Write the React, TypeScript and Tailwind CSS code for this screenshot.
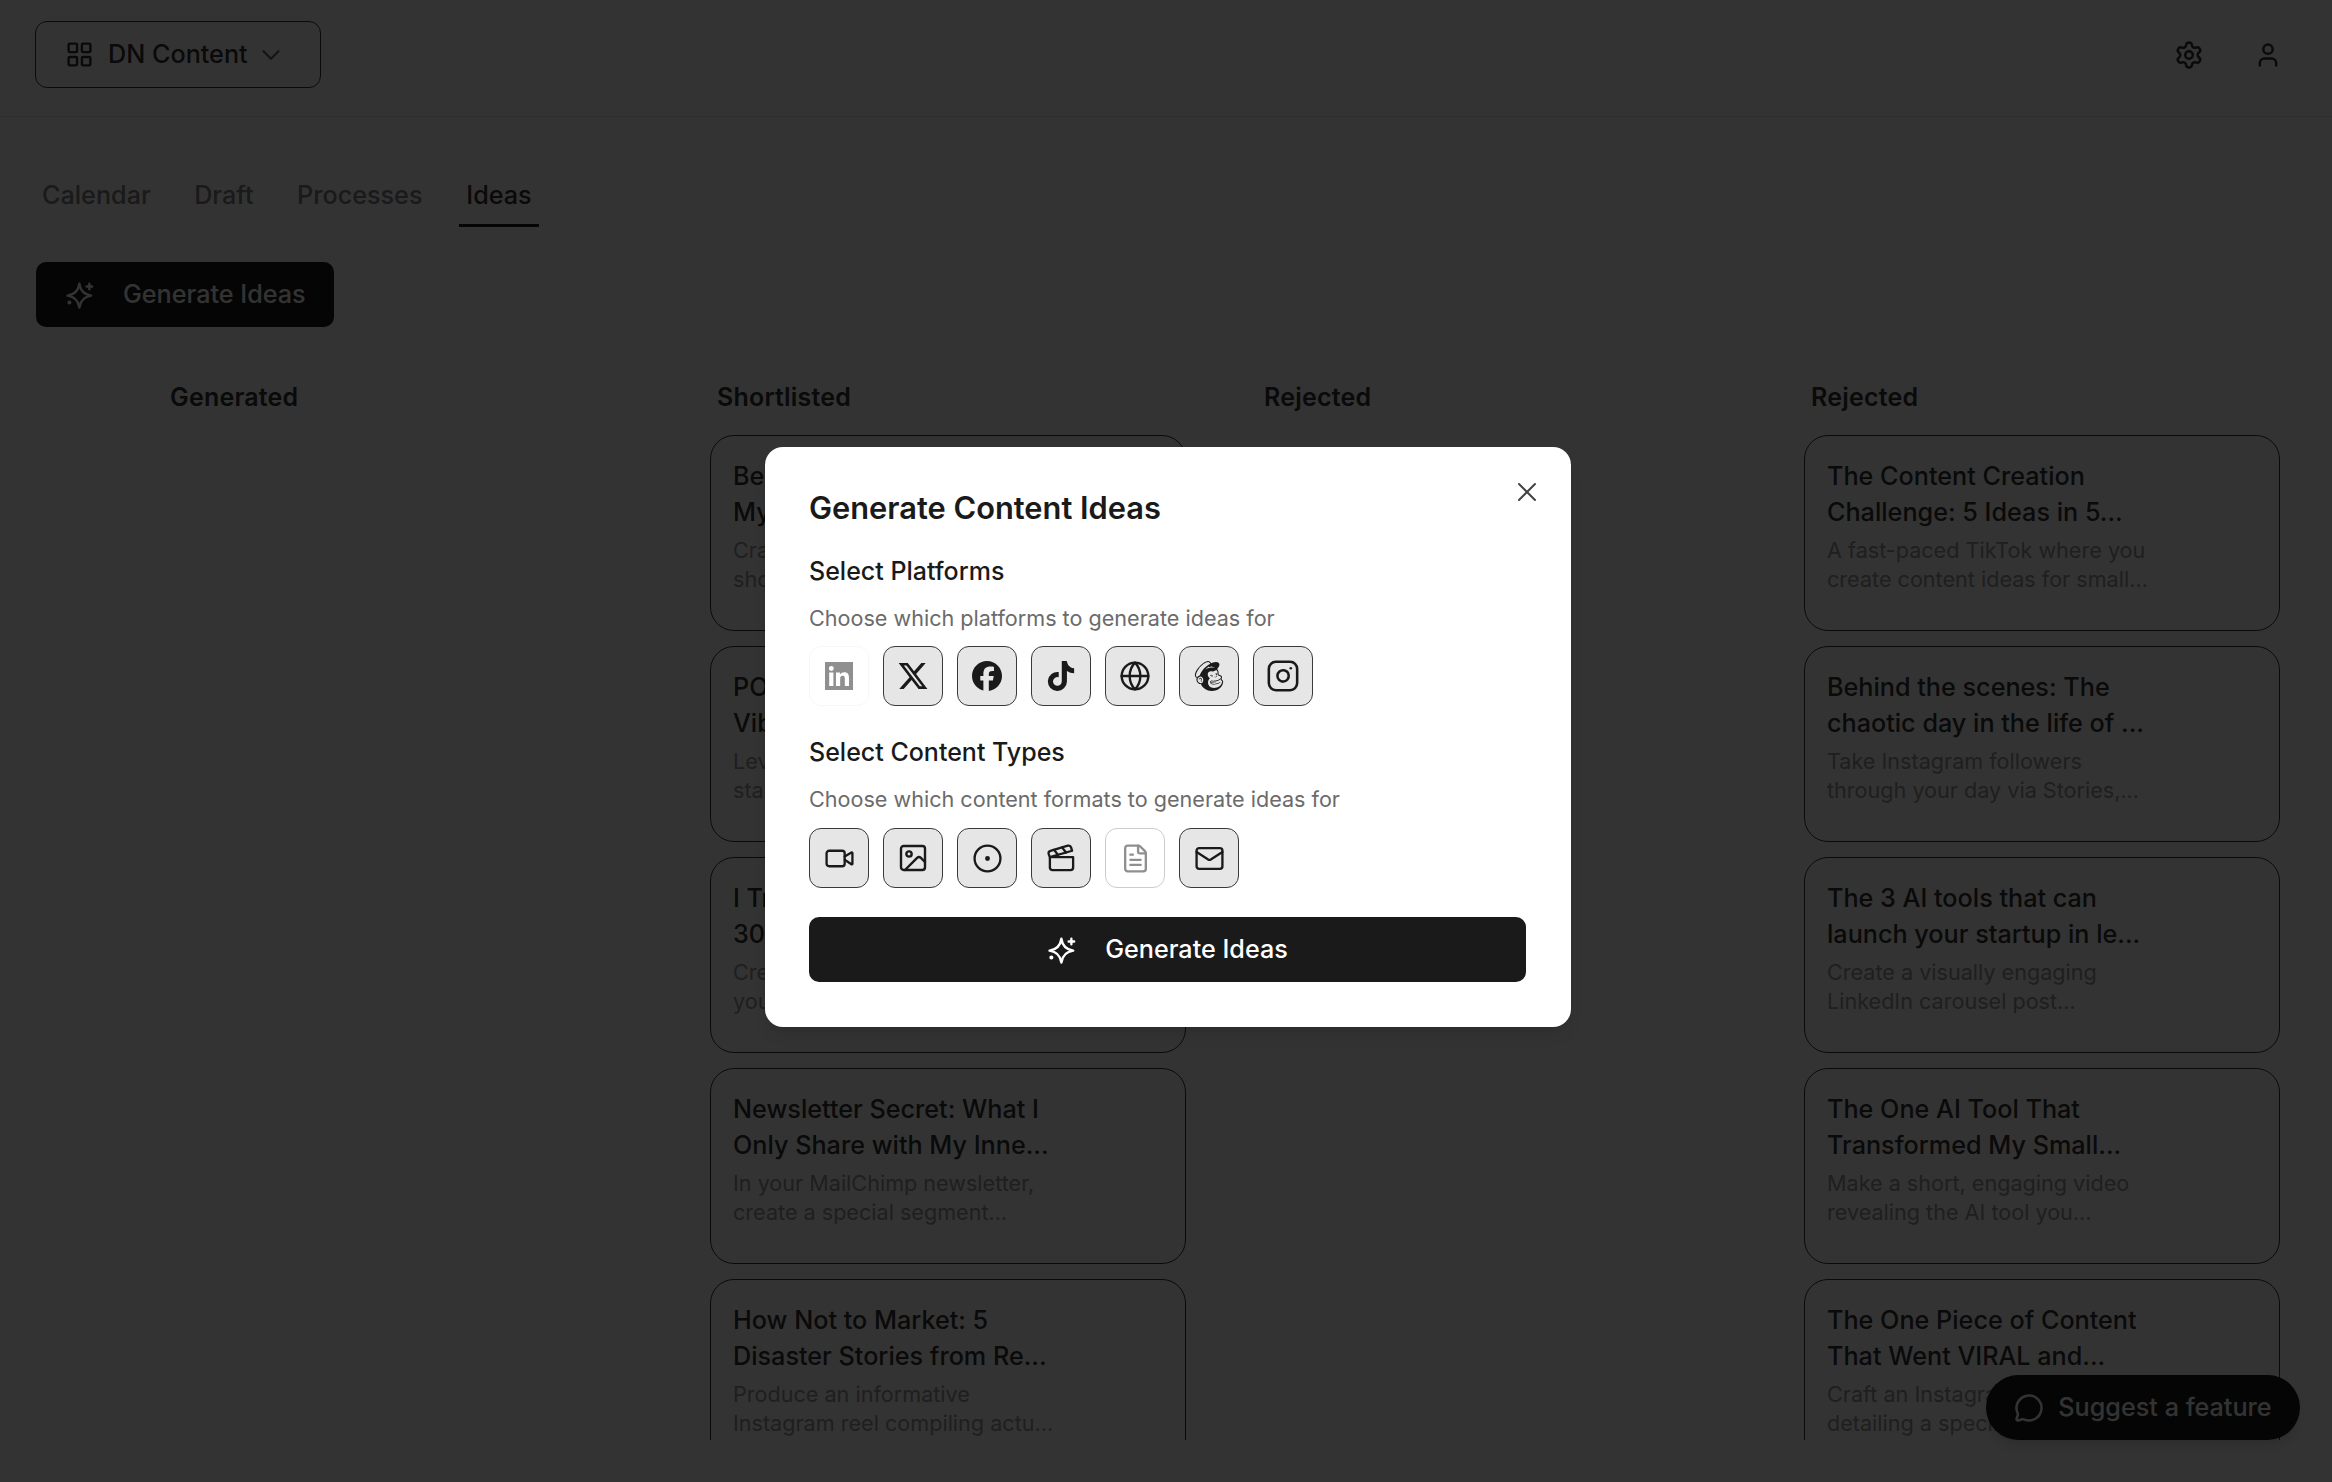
import React from 'react';
import {
  ChevronDown,
  CircleDot,
  Clapperboard,
  FileText,
  Globe,
  Image,
  Instagram,
  LayoutGrid,
  Mail,
  MessageCircle,
  Settings,
  User,
  Video,
  X,
} from 'lucide-react';
import { FaFacebook, FaTiktok, FaXTwitter } from 'react-icons/fa6';
import { SiMailchimp } from 'react-icons/si';

type Idea = { title: string; body: string };

const shortlisted: Idea[] = [
  { title: 'Behind the Scenes:\nMy Content Day...', body: 'Craft a short video that\nshows how you plan...' },
  { title: 'POV: Your Content\nVibe Check...', body: 'Leverage a trending sound\nstarting with a hook...' },
  { title: 'I Tried Posting for\n30 Days Straight...', body: 'Create a video showing\nyour results...' },
  { title: 'Newsletter Secret: What I\nOnly Share with My Inne...', body: 'In your MailChimp newsletter,\ncreate a special segment...' },
  { title: 'How Not to Market: 5\nDisaster Stories from Re...', body: 'Produce an informative\nInstagram reel compiling actu...' },
];

const rejected: Idea[] = [
  { title: 'The Content Creation\nChallenge: 5 Ideas in 5...', body: 'A fast-paced TikTok where you\ncreate content ideas for small...' },
  { title: 'Behind the scenes: The\nchaotic day in the life of ...', body: 'Take Instagram followers\nthrough your day via Stories,...' },
  { title: 'The 3 AI tools that can\nlaunch your startup in le...', body: 'Create a visually engaging\nLinkedIn carousel post...' },
  { title: 'The One AI Tool That\nTransformed My Small...', body: 'Make a short, engaging video\nrevealing the AI tool you...' },
  { title: 'The One Piece of Content\nThat Went VIRAL and...', body: 'Craft an Instagram reel\ndetailing a specific...' },
];

function SparkleIcon() {
  return (
    <svg width="30" height="30" viewBox="0 0 24 24" fill="none" stroke="currentColor" strokeWidth="1.9" strokeLinecap="round" strokeLinejoin="round">
      <path d="M11.500 3c.8 5.500 3.700 8.700 9.500 9.500-5.800.8-8.700 4-9.500 9.500-.8-5.500-3.700-8.700-9.500-9.500 5.800-.8 8.700-4 9.500-9.500z" />
      <path d="M19.500 3v4.400M17.300 5.200h4.400" />
      <circle cx="3.500" cy="18" r=".7" fill="currentColor" />
    </svg>
  );
}

function LinkedinSquare() {
  return (
    <svg width="28" height="28" viewBox="0 0 24 24" fill="currentColor">
      <path
        fillRule="evenodd"
        d="M0 0h24v24H0z M3.600 9h3.600v11.500H3.600z M5.400 3.500a2.100 2.100 0 1 1 0 4.200 2.100 2.100 0 0 1 0-4.200z M9.400 9h3.400v1.600c.6-1 1.800-1.900 3.600-1.900 3.600 0 4.200 2.300 4.200 5.400v6.400H17v-5.700c0-1.400 0-3-1.900-3s-2.100 1.400-2.100 2.900v5.800H9.400z"
      />
    </svg>
  );
}

function IdeaCard({ idea }: { idea: Idea }) {
  return (
    <div className="h-[196px] shrink-0 rounded-[24px] border border-[#333333] px-[22px] pt-[22px]">
      <h3 className="whitespace-pre-line text-[25.2px] leading-[36px] font-medium text-[#333333]">{idea.title}</h3>
      <p className="mt-[6px] whitespace-pre-line text-[21.6px] leading-[29px] text-[#999999]">{idea.body}</p>
    </div>
  );
}

function Column({ title, ideas }: { title: string; ideas: Idea[] }) {
  return (
    <div className="flex w-[476px] flex-col">
      <h2 className="mb-[24px] h-[30px] pt-[1px] pl-[7px] text-[25px] leading-[30px] font-semibold tracking-[0.2px] text-[#333333]">{title}</h2>
      <div className="flex flex-col gap-[15px]">
        {ideas.map((idea) => (
          <IdeaCard key={idea.title} idea={idea} />
        ))}
      </div>
    </div>
  );
}

function ToggleBox({ on, faint, children }: { on?: boolean; faint?: boolean; children: React.ReactNode }) {
  return (
    <div
      className={
        on
          ? 'flex h-[60px] w-[60px] items-center justify-center rounded-[12px] border border-[#3a3a3a] bg-[#e6e6e6] text-[#1a1a1a]'
          : faint
            ? 'flex h-[60px] w-[60px] items-center justify-center rounded-[12px] border border-[#f7f7f7] bg-white text-[#8f8f8f]'
            : 'flex h-[60px] w-[60px] items-center justify-center rounded-[12px] border border-[#cccccc] bg-white text-[#8f8f8f]'
      }
    >
      {children}
    </div>
  );
}

export default function App() {
  return (
    <div className="relative h-[1482px] w-[2332px] overflow-hidden bg-white font-[Inter,sans-serif] text-[#1a1a1a]">
      <header className="flex h-[117px] items-start justify-between border-b border-[#e5e5e5] pr-[32px] pl-[35px] pt-[21px]">
        <div className="flex h-[67px] w-[286px] items-center rounded-[12px] border border-[#333333] pl-[29px]">
          <LayoutGrid size={29} strokeWidth={2} className="text-[#333333]" />
          <span className="ml-[14px] text-[25.2px] font-medium text-[#333333]">DN Content</span>
          <ChevronDown size={30} strokeWidth={1.75} className="ml-[8px] text-[#666666]" />
        </div>
        <div className="flex items-center gap-[50px] pt-[19px] pr-[18px]">
          <Settings size={30} strokeWidth={2} className="text-[#333333]" />
          <User size={28} strokeWidth={2.1} className="text-[#333333]" />
        </div>
      </header>

      <nav className="flex h-[111px] items-start gap-[29.5px] pt-[56px] pl-[35px] text-[25.2px] font-medium text-[#808080]">
        <div className="flex h-[54px] items-start px-[7px] leading-[44px]">Calendar</div>
        <div className="flex h-[54px] items-start px-[7px] leading-[44px]">Draft</div>
        <div className="flex h-[54px] items-start px-[7px] leading-[44px]">Processes</div>
        <div className="flex h-[54px] w-[80px] items-start justify-center border-b-[3px] border-[#1a1a1a] leading-[44px] text-[#333333]">
          Ideas
        </div>
      </nav>

      <div className="pt-[34px] pl-[36px]">
        <button className="flex h-[65px] w-[298px] items-center rounded-[10px] bg-[#1a1a1a] pl-[29px] text-[25.2px] font-medium text-[#ffffff]">
          <SparkleIcon />
          <span className="ml-[28px]">Generate Ideas</span>
        </button>
      </div>

      <main className="mt-[54px] flex h-[1059px] gap-[71px] overflow-hidden pl-[163px]">
        <Column title="Generated" ideas={[]} />
        <Column title="Shortlisted" ideas={shortlisted} />
        <Column title="Rejected" ideas={[]} />
        <Column title="Rejected" ideas={rejected} />
      </main>

      <button className="absolute top-[1375px] left-[1986px] flex h-[65px] w-[314px] items-center justify-center gap-[14px] rounded-full bg-[#1a1a1a] text-[25.2px] font-medium text-white shadow-lg">
        <MessageCircle size={30} strokeWidth={2} />
        Suggest a feature
      </button>

      <div className="absolute inset-0 bg-black/80" />

      <div className="absolute top-[447px] left-[765px] h-[580px] w-[806px] rounded-[18px] bg-white px-[44px] shadow-lg">
        <button className="absolute top-[29px] right-[28px] text-[#444444]">
          <X size={32} strokeWidth={1.5} />
        </button>
        <h1 className="pt-[40px] text-[30.8px] leading-[42px] font-semibold text-[#1a1a1a]">Generate Content Ideas</h1>
        <h2 className="mt-[27px] text-[25px] leading-[30px] font-medium text-[#1a1a1a]">Select Platforms</h2>
        <p className="mt-[17px] text-[21.6px] leading-[30px] text-[#6b6b6b]">Choose which platforms to generate ideas for</p>
        <div className="mt-[13px] flex gap-[14px]">
          <ToggleBox faint><LinkedinSquare /></ToggleBox>
          <ToggleBox on><FaXTwitter size={32} /></ToggleBox>
          <ToggleBox on><FaFacebook size={30} /></ToggleBox>
          <ToggleBox on><FaTiktok size={30} /></ToggleBox>
          <ToggleBox on><Globe size={32} strokeWidth={1.8} /></ToggleBox>
          <ToggleBox on><SiMailchimp size={30} /></ToggleBox>
          <ToggleBox on><Instagram size={34} strokeWidth={1.8} /></ToggleBox>
        </div>
        <h2 className="mt-[31px] text-[25px] leading-[30px] font-medium text-[#1a1a1a]">Select Content Types</h2>
        <p className="mt-[17px] text-[21.6px] leading-[30px] text-[#6b6b6b]">Choose which content formats to generate ideas for</p>
        <div className="mt-[14px] flex gap-[14px]">
          <ToggleBox on><Video size={31} strokeWidth={1.8} /></ToggleBox>
          <ToggleBox on><Image size={32} strokeWidth={1.8} /></ToggleBox>
          <ToggleBox on><CircleDot size={31} strokeWidth={1.8} /></ToggleBox>
          <ToggleBox on><Clapperboard size={31} strokeWidth={1.8} /></ToggleBox>
          <ToggleBox><FileText size={31} strokeWidth={1.8} /></ToggleBox>
          <ToggleBox on><Mail size={31} strokeWidth={1.8} /></ToggleBox>
        </div>
        <button className="mt-[29px] flex h-[65px] w-[717px] items-center justify-center gap-[28px] rounded-[10px] bg-[#1a1a1a] text-[25.2px] font-medium text-white">
          <SparkleIcon />
          Generate Ideas
        </button>
      </div>
    </div>
  );
}
